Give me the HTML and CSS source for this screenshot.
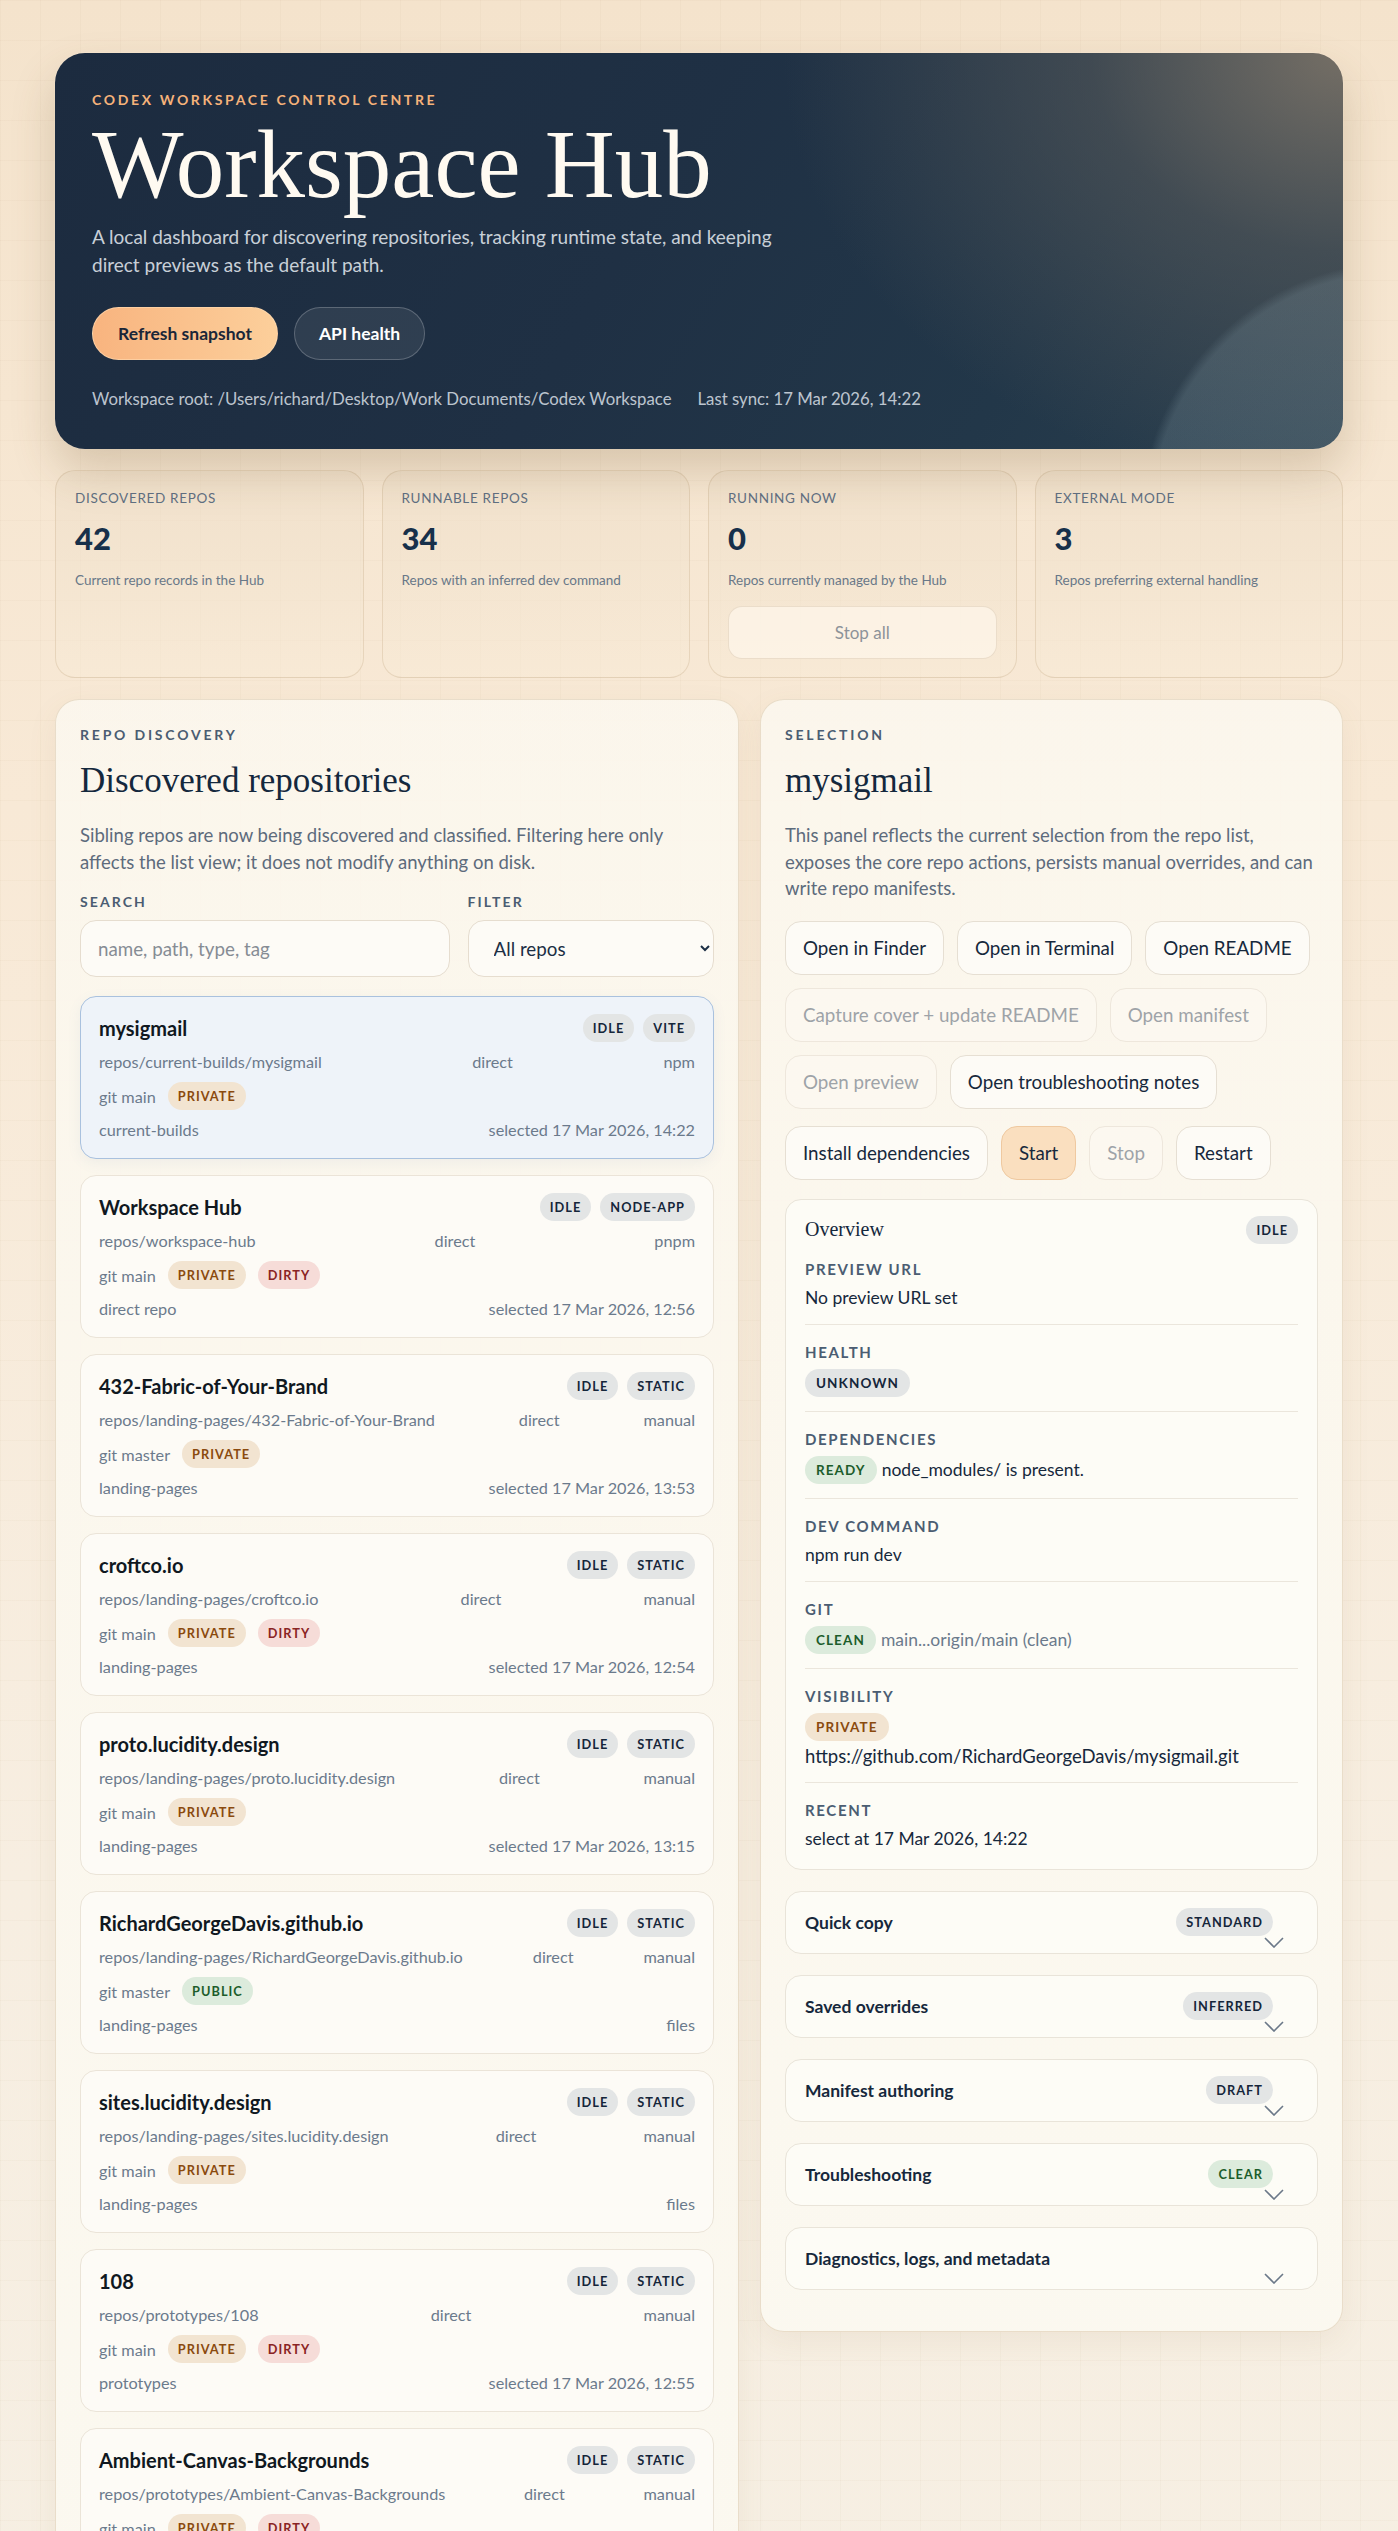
FILE: index.html
```html
<!DOCTYPE html>
<html lang="en">
<head>
<meta charset="utf-8">
<title>Workspace Hub</title>
<link rel="stylesheet" href="styles.css">
</head>
<body>
<div class="page">
  <header class="hero">
    <div class="eyebrow">Codex workspace control centre</div>
    <h1 class="hero-title">Workspace Hub</h1>
    <p class="hero-desc">A local dashboard for discovering repositories, tracking runtime state, and keeping direct previews as the default path.</p>
    <div class="hero-actions">
      <button class="btn-primary">Refresh snapshot</button>
      <button class="btn-ghost">API health</button>
    </div>
    <div class="hero-meta">
      <span>Workspace root: /Users/richard/Desktop/Work Documents/Codex Workspace</span>
      <span>Last sync: 17 Mar 2026, 14:22</span>
    </div>
  </header>

  <section class="stats">
    <div class="stat">
      <div class="stat-label">Discovered repos</div>
      <div class="stat-value">42</div>
      <div class="stat-desc">Current repo records in the Hub</div>
    </div>
    <div class="stat">
      <div class="stat-label">Runnable repos</div>
      <div class="stat-value">34</div>
      <div class="stat-desc">Repos with an inferred dev command</div>
    </div>
    <div class="stat">
      <div class="stat-label">Running now</div>
      <div class="stat-value">0</div>
      <div class="stat-desc">Repos currently managed by the Hub</div>
      <button class="stat-btn" disabled>Stop all</button>
    </div>
    <div class="stat">
      <div class="stat-label">External mode</div>
      <div class="stat-value">3</div>
      <div class="stat-desc">Repos preferring external handling</div>
    </div>
  </section>

  <main class="columns">
    <section class="panel">
      <div class="kicker">Repo discovery</div>
      <h2 class="panel-title">Discovered repositories</h2>
      <p class="panel-desc">Sibling repos are now being discovered and classified. Filtering here only affects the list view; it does not modify anything on disk.</p>
      <div class="filters">
        <label class="field">
          <span class="field-label">Search</span>
          <input class="input" type="text" placeholder="name, path, type, tag">
        </label>
        <label class="field">
          <span class="field-label">Filter</span>
          <select class="input select"><option>All repos</option></select>
        </label>
      </div>

      <div class="repo-list">
        <article class="repo repo-selected">
          <div class="repo-head"><span class="repo-name">mysigmail</span><span class="badges"><span class="badge">Idle</span><span class="badge">Vite</span></span></div>
          <div class="repo-row"><span>repos/current-builds/mysigmail</span><span>direct</span><span>npm</span></div>
          <div class="repo-git"><span>git main</span><span class="badge badge-private">Private</span></div>
          <div class="repo-row"><span>current-builds</span><span>selected 17 Mar 2026, 14:22</span></div>
        </article>
        <article class="repo">
          <div class="repo-head"><span class="repo-name">Workspace Hub</span><span class="badges"><span class="badge">Idle</span><span class="badge">Node-app</span></span></div>
          <div class="repo-row"><span>repos/workspace-hub</span><span>direct</span><span>pnpm</span></div>
          <div class="repo-git"><span>git main</span><span class="badge badge-private">Private</span><span class="badge badge-dirty">Dirty</span></div>
          <div class="repo-row"><span>direct repo</span><span>selected 17 Mar 2026, 12:56</span></div>
        </article>
        <article class="repo">
          <div class="repo-head"><span class="repo-name">432-Fabric-of-Your-Brand</span><span class="badges"><span class="badge">Idle</span><span class="badge">Static</span></span></div>
          <div class="repo-row"><span>repos/landing-pages/432-Fabric-of-Your-Brand</span><span>direct</span><span>manual</span></div>
          <div class="repo-git"><span>git master</span><span class="badge badge-private">Private</span></div>
          <div class="repo-row"><span>landing-pages</span><span>selected 17 Mar 2026, 13:53</span></div>
        </article>
        <article class="repo">
          <div class="repo-head"><span class="repo-name">croftco.io</span><span class="badges"><span class="badge">Idle</span><span class="badge">Static</span></span></div>
          <div class="repo-row"><span>repos/landing-pages/croftco.io</span><span>direct</span><span>manual</span></div>
          <div class="repo-git"><span>git main</span><span class="badge badge-private">Private</span><span class="badge badge-dirty">Dirty</span></div>
          <div class="repo-row"><span>landing-pages</span><span>selected 17 Mar 2026, 12:54</span></div>
        </article>
        <article class="repo">
          <div class="repo-head"><span class="repo-name">proto.lucidity.design</span><span class="badges"><span class="badge">Idle</span><span class="badge">Static</span></span></div>
          <div class="repo-row"><span>repos/landing-pages/proto.lucidity.design</span><span>direct</span><span>manual</span></div>
          <div class="repo-git"><span>git main</span><span class="badge badge-private">Private</span></div>
          <div class="repo-row"><span>landing-pages</span><span>selected 17 Mar 2026, 13:15</span></div>
        </article>
        <article class="repo">
          <div class="repo-head"><span class="repo-name">RichardGeorgeDavis.github.io</span><span class="badges"><span class="badge">Idle</span><span class="badge">Static</span></span></div>
          <div class="repo-row"><span>repos/landing-pages/RichardGeorgeDavis.github.io</span><span>direct</span><span>manual</span></div>
          <div class="repo-git"><span>git master</span><span class="badge badge-green">Public</span></div>
          <div class="repo-row"><span>landing-pages</span><span>files</span></div>
        </article>
        <article class="repo">
          <div class="repo-head"><span class="repo-name">sites.lucidity.design</span><span class="badges"><span class="badge">Idle</span><span class="badge">Static</span></span></div>
          <div class="repo-row"><span>repos/landing-pages/sites.lucidity.design</span><span>direct</span><span>manual</span></div>
          <div class="repo-git"><span>git main</span><span class="badge badge-private">Private</span></div>
          <div class="repo-row"><span>landing-pages</span><span>files</span></div>
        </article>
        <article class="repo">
          <div class="repo-head"><span class="repo-name">108</span><span class="badges"><span class="badge">Idle</span><span class="badge">Static</span></span></div>
          <div class="repo-row"><span>repos/prototypes/108</span><span>direct</span><span>manual</span></div>
          <div class="repo-git"><span>git main</span><span class="badge badge-private">Private</span><span class="badge badge-dirty">Dirty</span></div>
          <div class="repo-row"><span>prototypes</span><span>selected 17 Mar 2026, 12:55</span></div>
        </article>
        <article class="repo">
          <div class="repo-head"><span class="repo-name">Ambient-Canvas-Backgrounds</span><span class="badges"><span class="badge">Idle</span><span class="badge">Static</span></span></div>
          <div class="repo-row"><span>repos/prototypes/Ambient-Canvas-Backgrounds</span><span>direct</span><span>manual</span></div>
          <div class="repo-git"><span>git main</span><span class="badge badge-private">Private</span><span class="badge badge-dirty">Dirty</span></div>
          <div class="repo-row"><span>prototypes</span><span>files</span></div>
        </article>
      </div>
    </section>

    <aside class="panel panel-side">
      <div class="kicker">Selection</div>
      <h2 class="panel-title">mysigmail</h2>
      <p class="panel-desc">This panel reflects the current selection from the repo list, exposes the core repo actions, persists manual overrides, and can write repo manifests.</p>

      <div class="actions">
        <button class="btn">Open in Finder</button>
        <button class="btn">Open in Terminal</button>
        <button class="btn">Open README</button>
        <button class="btn" disabled>Capture cover + update README</button>
        <button class="btn" disabled>Open manifest</button>
        <button class="btn" disabled>Open preview</button>
        <button class="btn">Open troubleshooting notes</button>
      </div>
      <div class="actions actions-runtime">
        <button class="btn">Install dependencies</button>
        <button class="btn btn-start">Start</button>
        <button class="btn" disabled>Stop</button>
        <button class="btn">Restart</button>
      </div>

      <div class="overview">
        <div class="overview-head"><span class="overview-title">Overview</span><span class="badge">Idle</span></div>
        <div class="ov-item first">
          <div class="ov-label">Preview URL</div>
          <div class="ov-value">No preview URL set</div>
        </div>
        <div class="ov-item">
          <div class="ov-label">Health</div>
          <div class="ov-value"><span class="badge">Unknown</span></div>
        </div>
        <div class="ov-item">
          <div class="ov-label">Dependencies</div>
          <div class="ov-value ov-inline"><span class="badge badge-green">Ready</span><span>node_modules/ is present.</span></div>
        </div>
        <div class="ov-item">
          <div class="ov-label">Dev command</div>
          <div class="ov-value">npm run dev</div>
        </div>
        <div class="ov-item">
          <div class="ov-label">Git</div>
          <div class="ov-value ov-inline"><span class="badge badge-green">Clean</span><span class="muted">main...origin/main (clean)</span></div>
        </div>
        <div class="ov-item">
          <div class="ov-label">Visibility</div>
          <div class="ov-stack">
            <span class="badge badge-private">Private</span>
            <span class="ov-value">https://github.com/RichardGeorgeDavis/mysigmail.git</span>
          </div>
        </div>
        <div class="ov-item">
          <div class="ov-label">Recent</div>
          <div class="ov-value">select at 17 Mar 2026, 14:22</div>
        </div>
      </div>

      <div class="accordions">
        <details class="acc">
          <summary><span class="acc-title">Quick copy</span><span class="badge">Standard</span><svg class="chev" viewBox="0 0 20 11" aria-hidden="true"><path d="M1 1l9 9 9-9"/></svg></summary>
        </details>
        <details class="acc">
          <summary><span class="acc-title">Saved overrides</span><span class="badge">Inferred</span><svg class="chev" viewBox="0 0 20 11" aria-hidden="true"><path d="M1 1l9 9 9-9"/></svg></summary>
        </details>
        <details class="acc">
          <summary><span class="acc-title">Manifest authoring</span><span class="badge">Draft</span><svg class="chev" viewBox="0 0 20 11" aria-hidden="true"><path d="M1 1l9 9 9-9"/></svg></summary>
        </details>
        <details class="acc">
          <summary><span class="acc-title">Troubleshooting</span><span class="badge badge-green">Clear</span><svg class="chev" viewBox="0 0 20 11" aria-hidden="true"><path d="M1 1l9 9 9-9"/></svg></summary>
        </details>
        <details class="acc">
          <summary><span class="acc-title">Diagnostics, logs, and metadata</span><svg class="chev" viewBox="0 0 20 11" aria-hidden="true"><path d="M1 1l9 9 9-9"/></svg></summary>
        </details>
      </div>
    </aside>
  </main>
</div>
</body>
</html>
```

FILE: styles.css
```css
* { box-sizing: border-box; }

html, body { margin: 0; }

body {
  font-family: Lato, "Open Sans", "Noto Sans", sans-serif;
  color: #16283c;
  background-color: #f6ecdd;
  background-image:
    linear-gradient(rgba(150, 110, 60, 0.035) 1px, transparent 1px),
    linear-gradient(90deg, rgba(150, 110, 60, 0.035) 1px, transparent 1px),
    linear-gradient(180deg, #f4e3cc 0%, #f8e9d6 30%, #f7eee1 70%, #f6efe3 100%);
  background-size: 40px 40px, 40px 40px, 100% 100%;
  min-height: 100vh;
}

.page {
  max-width: 1288px;
  margin: 0 auto;
  padding: 53px 0 60px;
}

/* ---------- Hero ---------- */
.hero {
  position: relative;
  border-radius: 30px;
  padding: 38px 37px 39px;
  color: #fff;
  background:
    radial-gradient(circle 260px at calc(100% + 57px) calc(100% + 73px), rgba(150, 175, 185, 0.22) 0, rgba(150, 175, 185, 0.2) 96%, rgba(150, 175, 185, 0) 100%),
    radial-gradient(ellipse 560px 440px at 100% 0%, rgba(125, 116, 104, 0.9) 0%, rgba(95, 94, 92, 0.5) 45%, rgba(60, 70, 80, 0) 100%),
    linear-gradient(120deg, #1c2b3f 0%, #1f3044 45%, #223749 75%, #2a3f4e 100%);
  box-shadow: 0 22px 44px rgba(110, 80, 40, 0.22), 0 0 0 1px rgba(255, 240, 220, 0.25);
}

.eyebrow {
  font-size: 14px;
  line-height: 18px;
  font-weight: 700;
  letter-spacing: 0.19em;
  text-transform: uppercase;
  color: #f5b27a;
}

.hero-title {
  margin: 7px 0 0;
  font-family: "Liberation Serif", "Times New Roman", serif;
  font-weight: 400;
  font-size: 97px;
  line-height: 1;
  color: #fffaf1;
}

.hero-desc {
  margin: 10px 0 0;
  max-width: 715px;
  font-size: 19px;
  line-height: 28px;
  color: rgba(232, 238, 244, 0.86);
}

.hero-actions {
  display: flex;
  gap: 16px;
  margin-top: 28px;
}

.btn-primary,
.btn-ghost {
  height: 53px;
  padding: 0 24px;
  border-radius: 999px;
  font-family: inherit;
  font-size: 17.5px;
  font-weight: 700;
}

.btn-primary {
  border: 1px solid rgba(255, 220, 180, 0.6);
  background: linear-gradient(90deg, #f8b47f 0%, #fccf9b 100%);
  color: #1a2638;
  padding: 0 25px;
}

.btn-ghost {
  border: 1px solid rgba(255, 255, 255, 0.22);
  background: rgba(255, 255, 255, 0.08);
  color: #fff;
}

.hero-meta {
  display: flex;
  gap: 26px;
  margin-top: 28px;
  font-size: 16.75px;
  line-height: 22px;
  color: rgba(225, 232, 240, 0.82);
}

/* ---------- Stats ---------- */
.stats {
  display: grid;
  grid-template-columns: repeat(4, 1fr);
  gap: 18px;
  margin-top: 21px;
}

.stat {
  border-radius: 20px;
  border: 1px solid rgba(200, 175, 140, 0.35);
  background: linear-gradient(180deg, rgba(235, 220, 198, 0.5) 0%, rgba(248, 234, 214, 0.5) 100%);
  padding: 18px 19px 18px;
  display: flex;
  flex-direction: column;
}

.stat-label {
  font-size: 13.5px;
  line-height: 18px;
  letter-spacing: 0.05em;
  text-transform: uppercase;
  color: #5f6f82;
}

.stat-value {
  margin-top: 12px;
  font-size: 31px;
  line-height: 38px;
  font-weight: 900;
  color: #17304a;
}

.stat-desc {
  margin-top: 13px;
  font-size: 13.5px;
  line-height: 20px;
  color: #697888;
}

.stat-btn {
  margin-top: 16px;
  height: 53px;
  width: 100%;
  border-radius: 14px;
  border: 1px solid rgba(230, 215, 195, 0.8);
  background: rgba(253, 245, 234, 0.75);
  font-family: inherit;
  font-size: 17px;
  color: #8d9299;
}

/* ---------- Columns ---------- */
.columns {
  display: grid;
  grid-template-columns: 684px 1fr;
  gap: 21px;
  margin-top: 21px;
  align-items: start;
}

.panel {
  border-radius: 24px;
  border: 1px solid rgba(225, 210, 185, 0.7);
  background: linear-gradient(180deg, rgba(251, 246, 236, 0.96) 0%, rgba(251, 248, 240, 0.96) 100%);
  box-shadow: 0 10px 30px rgba(140, 110, 70, 0.08);
  padding: 26px 24px 28px;
}

.panel-side {
  padding-bottom: 41px;
}

.kicker {
  font-size: 14px;
  line-height: 18px;
  font-weight: 700;
  letter-spacing: 0.2em;
  text-transform: uppercase;
  color: #4b5d72;
}

.panel-title {
  margin: 17px 0 0;
  font-family: "Liberation Serif", "Times New Roman", serif;
  font-weight: 400;
  font-size: 35px;
  line-height: 40px;
  color: #14283d;
}

.panel-desc {
  margin: 21px 0 0;
  font-size: 18.5px;
  line-height: 26.5px;
  color: #5d6b7c;
}

/* ---------- Filters ---------- */
.filters {
  display: grid;
  grid-template-columns: 1.5fr 1fr;
  gap: 18px;
  margin-top: 18px;
}

.field {
  display: flex;
  flex-direction: column;
  gap: 9px;
}

.field-label {
  font-size: 14px;
  line-height: 18px;
  font-weight: 700;
  letter-spacing: 0.15em;
  text-transform: uppercase;
  color: #4b5d72;
}

.input {
  height: 57px;
  width: 100%;
  border-radius: 16px;
  border: 1px solid #e6ddcf;
  background: #fdfbf6;
  padding: 0 17px;
  font-family: inherit;
  font-size: 18.75px;
  color: #1b2e44;
}

.input::placeholder { color: #868c94; }

.select {
  padding-left: 21px;
  padding-right: 10px;
}

/* ---------- Repo list ---------- */
.repo-list {
  display: flex;
  flex-direction: column;
  gap: 16px;
  margin-top: 19px;
}

.repo {
  border-radius: 16px;
  border: 1px solid #ebe4d8;
  background: #fdfbf6;
  padding: 17px 18px 17px 18px;
  display: flex;
  flex-direction: column;
  gap: 9px;
  font-size: 16.25px;
  color: #6b7a8c;
}

.repo-selected {
  border: 1.5px solid #a9c1de;
  background: #eef3f9;
  box-shadow: 0 4px 14px rgba(90, 130, 180, 0.08);
}

.repo-head {
  display: flex;
  align-items: center;
  justify-content: space-between;
  height: 28px;
}

.repo-name {
  font-size: 20px;
  line-height: 24px;
  font-weight: 700;
  color: #10181f;
}

.badges {
  display: flex;
  gap: 9px;
}

.repo-row {
  display: flex;
  justify-content: space-between;
  line-height: 22px;
}

.repo-git {
  display: flex;
  align-items: center;
  gap: 12px;
}

/* ---------- Badges ---------- */
.badge {
  display: inline-flex;
  align-items: center;
  height: 28px;
  padding: 0 10px;
  border-radius: 999px;
  background: #e3e5e5;
  color: #15263a;
  font-size: 12.75px;
  font-weight: 700;
  letter-spacing: 0.08em;
  text-transform: uppercase;
  white-space: nowrap;
}

.badge-private { background: #f2e4d1; color: #8a4a0e; }
.badge-dirty { background: #f6dcd8; color: #8a2424; }
.badge-green { background: #dcebdc; color: #1c5d2b; }

/* ---------- Actions ---------- */
.actions {
  display: flex;
  flex-wrap: wrap;
  gap: 13px;
  margin-top: 19px;
}

.actions-runtime {
  margin-top: 17px;
}

.btn {
  height: 54px;
  min-width: 73px;
  padding: 0 17px;
  border-radius: 16px;
  border: 1px solid #e6dfd3;
  background: #fdfbf6;
  font-family: inherit;
  font-size: 18.75px;
  color: #16283c;
}

.btn:disabled {
  color: #9ea3a8;
  background: rgba(253, 250, 243, 0.5);
  border-color: #eee7dc;
}

.btn-start {
  background: #fadfbf;
  border-color: #efc9a0;
  color: #16283c;
}

/* ---------- Overview ---------- */
.overview {
  margin-top: 19px;
  border-radius: 16px;
  border: 1px solid #e9e4d9;
  background: #fdfcf6;
  padding: 16px 19px 18px;
}

.overview-head {
  display: flex;
  align-items: center;
  justify-content: space-between;
}

.overview-title {
  font-family: "Liberation Serif", "Times New Roman", serif;
  font-size: 20px;
  color: #14283d;
}

.ov-item {
  padding: 17px 0 14px;
  border-top: 1px solid #ebe6dc;
}

.ov-item.first {
  border-top: 0;
  padding-top: 15px;
}

.ov-item:last-child {
  padding-bottom: 0;
}

.ov-label {
  font-size: 15px;
  line-height: 20px;
  font-weight: 700;
  letter-spacing: 0.11em;
  text-transform: uppercase;
  color: #4b5d72;
  margin-bottom: 7px;
}

.ov-value {
  font-size: 17.5px;
  line-height: 24px;
  color: #16283c;
}

.ov-inline {
  display: flex;
  align-items: center;
  gap: 5px;
}

.ov-item .badge {
  font-size: 13.5px;
  padding: 0 11px;
}

.ov-stack {
  display: flex;
  flex-direction: column;
  align-items: flex-start;
  gap: 3px;
}

.ov-stack .ov-value { font-size: 18.5px; }

.muted { color: #6b7a8c; }

/* ---------- Accordions ---------- */
.accordions {
  display: flex;
  flex-direction: column;
  gap: 21px;
  margin-top: 21px;
}

.acc {
  position: relative;
  border-radius: 16px;
  border: 1px solid #e9e4d9;
  background: #fdfcf6;
}

.acc summary {
  list-style: none;
  display: flex;
  align-items: center;
  justify-content: space-between;
  height: 61px;
  padding: 0 44px 0 19px;
  cursor: pointer;
}

.acc summary::-webkit-details-marker { display: none; }

.acc-title {
  font-size: 17.5px;
  font-weight: 700;
  color: #16283c;
}

.chev {
  position: absolute;
  right: 33px;
  top: 45px;
  width: 20px;
  height: 11px;
  fill: none;
  stroke: #6b7888;
  stroke-width: 1.6;
}
```
